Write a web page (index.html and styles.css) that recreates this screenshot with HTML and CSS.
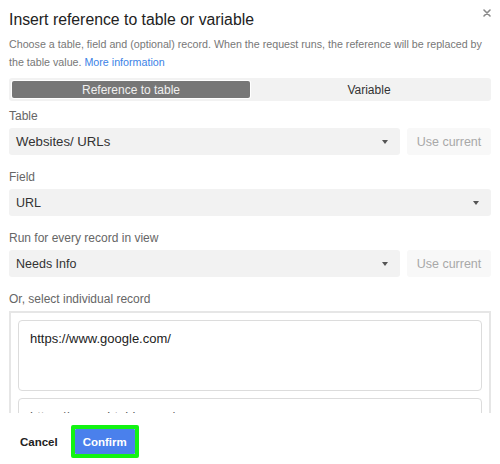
FILE: index.html
```html
<!DOCTYPE html>
<html>
<head>
<meta charset="utf-8">
<link rel="stylesheet" href="styles.css">
</head>
<body>
<div class="dialog">
  <button class="close" aria-label="Close">
    <svg width="8" height="8" viewBox="0 0 8 8"><path d="M1 1L7 7M7 1L1 7" stroke="#8a8a8a" stroke-width="1.6" stroke-linecap="round"/></svg>
  </button>
  <h1 class="title">Insert reference to table or variable</h1>
  <p class="desc">Choose a table, field and (optional) record. When the request runs, the reference will be replaced by the table value. <a class="link" href="#">More information</a></p>
  <div class="segmented">
    <div class="seg seg-active">Reference to table</div>
    <div class="seg">Variable</div>
  </div>

  <div class="group">
    <div class="label">Table</div>
    <div class="row">
      <div class="select"><span>Websites/ URLs</span><span class="arrow"></span></div>
      <div class="use">Use current</div>
    </div>
  </div>

  <div class="group">
    <div class="label">Field</div>
    <div class="row">
      <div class="select select-sm"><span>URL</span><span class="arrow"></span></div>
    </div>
  </div>

  <div class="group">
    <div class="label">Run for every record in view</div>
    <div class="row">
      <div class="select select-sm"><span>Needs Info</span><span class="arrow"></span></div>
      <div class="use">Use current</div>
    </div>
  </div>

  <div class="group">
    <div class="label">Or, select individual record</div>
    <div class="records">
      <div class="card">https://www.google.com/</div>
      <div class="card card-next">https://www.airtable.com/</div>
    </div>
  </div>

  <div class="footer">
    <button class="cancel">Cancel</button>
    <div class="confirm-frame"><button class="confirm">Confirm</button></div>
  </div>
</div>
</body>
</html>
```

FILE: styles.css
```css
* { box-sizing: border-box; }
html, body { margin: 0; padding: 0; background: #fff; }
body { font-family: "Liberation Sans", Arial, sans-serif; color: #333; }
.dialog { position: relative; width: 500px; height: 464px; padding: 9px 9px 0 9px; overflow: hidden; }
.close { position: absolute; top: 9px; right: 9px; width: 8px; height: 8px; padding: 0; border: 0; background: none; display: flex; }
.title { margin: 0; font-size: 15.8px; line-height: 22px; font-weight: normal; color: #222; }
.desc { margin: 4px 0 0 0; font-size: 10.7px; line-height: 18px; color: #777; }
.link { color: #3b82e6; text-decoration: none; }
.segmented { margin-top: 7px; height: 23px; background: #f2f2f2; border-radius: 3px; display: flex; padding: 3px; }
.seg { flex: 1; display: flex; align-items: center; justify-content: center; font-size: 12px; color: #333; }
.seg-active { flex: 0 0 238px; background: #777; color: #f0f0f0; border-radius: 2px; box-shadow: 0 0 0 1px #fff; }
.group { margin-top: 7px; }
.group + .group { margin-top: 14px; }
.label { font-size: 12px; line-height: 16px; color: #666; }
.row { margin-top: 4px; display: flex; gap: 7px; height: 27px; }
.select { flex: 1; background: #f2f2f2; border-radius: 3px; display: flex; align-items: center; justify-content: space-between; padding: 0 12px 0 7px; font-size: 13.2px; color: #333; }
.select-sm { font-size: 12.5px; }
.arrow { width: 0; height: 0; border-left: 3px solid transparent; border-right: 3px solid transparent; border-top: 4px solid #555; }
.use { flex: 0 0 84px; background: #f8f8f8; border-radius: 3px; display: flex; align-items: center; justify-content: center; font-size: 12.5px; color: #a8a8a8; }
.records { margin-top: 4px; height: 102px; border: 2px solid #e6e6e6; border-bottom: 0; padding: 7px 7px 0 7px; overflow: hidden; display: flex; flex-direction: column; gap: 7px; }
.card { flex: 0 0 71px; border: 1px solid #dcdcdc; border-radius: 4px; padding: 10px 11px; font-size: 13px; line-height: 16px; color: #222; }
.card-next { color: #555; }
.footer { margin-top: 12px; display: flex; align-items: center; gap: 13px; padding-left: 11px; }
.cancel { border: 0; background: none; padding: 0; font-family: inherit; font-size: 11.5px; font-weight: bold; color: #222; }
.confirm-frame { border: 4px solid #13f313; border-radius: 2px; display: flex; padding: 0; }
.confirm { border: 0; background: #4a80ec; color: #fff; font-family: inherit; font-size: 11.5px; font-weight: bold; height: 25px; width: 60px; padding: 0; border-radius: 1px; }
```
